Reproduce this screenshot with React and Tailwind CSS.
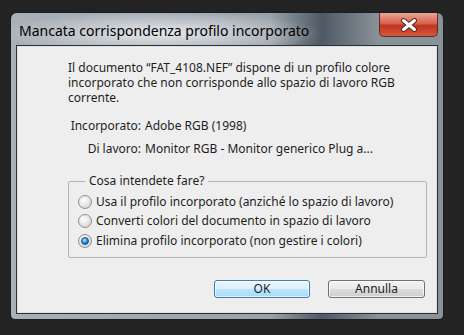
import React from 'react';

function Radio({ checked }) {
  return (
    <span className="w-[14px] h-[14px] rounded-full border border-[#8e8f8f] bg-[radial-gradient(circle_at_40%_35%,#ffffff_0%,#e3e3e3_55%,#c4c4c4_100%)] flex items-center justify-center shrink-0">
      {checked && (
        <span className="w-[8px] h-[8px] rounded-full bg-[radial-gradient(circle_at_40%_35%,#b5e8ff_0%,#1a8ad4_55%,#0b4f8a_100%)] border border-[#14507f]" />
      )}
    </span>
  );
}

function CloseIcon() {
  return (
    <svg width="20" height="14" viewBox="0 0 20 14">
      <path d="M4.5 2.5 L15.5 11.5 M15.5 2.5 L4.5 11.5" stroke="#5a2a24" strokeWidth="5" strokeLinecap="round" />
      <path d="M4.5 2.5 L15.5 11.5 M15.5 2.5 L4.5 11.5" stroke="#ffffff" strokeWidth="3" strokeLinecap="round" />
    </svg>
  );
}

const options = [
  { label: 'Usa il profilo incorporato (anziché lo spazio di lavoro)', checked: false },
  { label: 'Converti colori del documento in spazio di lavoro', checked: false },
  { label: 'Elimina profilo incorporato (non gestire i colori)', checked: true },
];

export default function App() {
  return (
    <div className="w-[464px] h-[335px] bg-[#232323] pt-[12px] pl-[10px] font-['Noto_Sans',sans-serif] overflow-hidden">
      <div className="w-[434px] h-[308px] rounded-t-[7px] rounded-b-[5px] border border-[#1b1f24] flex flex-col [background:radial-gradient(ellipse_160px_22px_at_150px_20px,#e6e9ec_0%,rgba(230,233,236,0)_100%),linear-gradient(90deg,#a9b0b7_0%,#9aa2a9_60%,#4e5964_72%,#8a9299_85%,#8a9299_100%)]">
        {/* Title bar */}
        <div className="h-[33px] flex items-start justify-between">
          <span className="pl-[8px] pt-[9px] text-[14px] leading-[18px] text-black">
            Mancata corrispondenza profilo incorporato
          </span>
          <div className="mr-[5px] w-[59px] h-[24px] rounded-b-[5px] border border-[#5c2e29] border-t-0 bg-[linear-gradient(180deg,#eaa596_0%,#d8634d_45%,#c0341f_55%,#d05a3c_100%)] flex items-center justify-center">
            <CloseIcon />
          </div>
        </div>
        {/* Client area */}
        <div className="flex-1 mx-[6px] mb-[6px] border border-[#dde1e4] shadow-[0_0_0_1px_#2a3038] bg-[#eeeeee] text-[12px] text-[#1e1e1e] flex flex-col pl-[50px] pr-[10px] pt-[13px]">
          <p className="leading-[15px] whitespace-nowrap">
            Il documento “FAT_4108.NEF” dispone di un profilo colore
            <br />
            incorporato che non corrisponde allo spazio di lavoro RGB
            <br />
            corrente.
          </p>
          <div className="mt-[13px] flex flex-col gap-[8px] leading-[15px]">
            <div className="flex gap-[4px]">
              <span className="w-[73px] text-right">Incorporato:</span>
              <span>Adobe RGB (1998)</span>
            </div>
            <div className="flex gap-[4px]">
              <span className="w-[73px] text-right">Di lavoro:</span>
              <span>Monitor RGB - Monitor generico Plug a...</span>
            </div>
          </div>
          <div className="mt-[25px] w-[359px] h-[77px] border border-[#b4b4b4] rounded-[2px] pl-[9px] flex flex-col">
            <span className="self-start ml-[7px] -mt-[8px] px-[4px] bg-[#eeeeee] leading-[14px]">Cosa intendete fare?</span>
            <div className="mt-[4px] flex flex-col">
              {options.map((o) => (
                <label key={o.label} className="flex items-center gap-[4px] h-[19.5px]">
                  <Radio checked={o.checked} />
                  <span>{o.label}</span>
                </label>
              ))}
            </div>
          </div>
          <div className="mt-[22px] flex justify-end gap-[18px] pr-[1px]">
            <button className="w-[96px] h-[18px] rounded-[3px] border border-[#3c7fb1] bg-[linear-gradient(180deg,#eaf6fd_0%,#d9f0fc_50%,#bee6fd_51%,#a7d9f5_100%)] text-[12px] leading-[14px] shadow-[inset_0_0_0_1px_rgba(255,255,255,0.7)]">
              OK
            </button>
            <button className="w-[97px] h-[18px] rounded-[3px] border border-[#707070] bg-[linear-gradient(180deg,#f2f2f2_0%,#ebebeb_50%,#dddddd_51%,#cfcfcf_100%)] text-[12px] leading-[14px] shadow-[inset_0_0_0_1px_rgba(255,255,255,0.7)]">
              Annulla
            </button>
          </div>
        </div>
      </div>
    </div>
  );
}
